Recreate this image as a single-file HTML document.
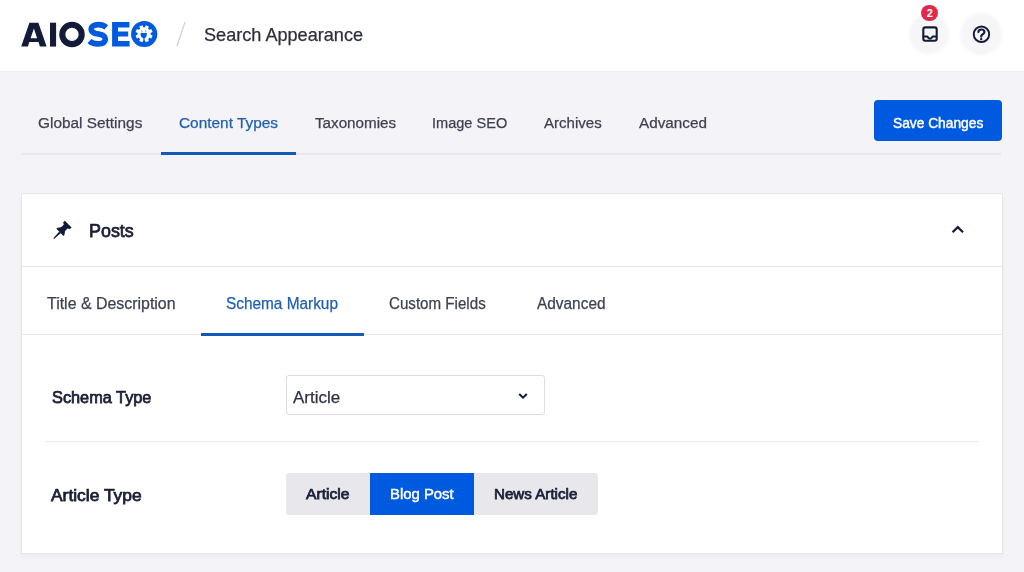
<!DOCTYPE html>
<html><head><meta charset="utf-8">
<style>
*{margin:0;padding:0;box-sizing:border-box}
html,body{width:1024px;height:572px;overflow:hidden;background:#F4F3F8;font-family:"Liberation Sans",sans-serif}
.a{position:absolute;white-space:nowrap}
#hdr{position:absolute;left:0;top:0;width:1024px;height:71px;background:#fff;box-shadow:0 1px 2px rgba(30,30,60,0.03)}
.t{font-size:15px;line-height:15px;color:#434960}
.st{font-size:15px;line-height:15px;color:#434960}
.blue{color:#1f5fb8}
</style></head><body>
<div id="hdr">
  <svg class="a" style="left:0;top:0" width="170" height="71" viewBox="0 0 170 71">
    <path fill="#141B38" fill-rule="evenodd" d="M21.2 46.6 L29.4 22.7 L38.4 22.7 L46.6 46.6 L39.9 46.6 L38.5 42 L29.3 42 L27.9 46.6 Z M33.9 28.6 L30.6 38.2 L37.1 38.2 Z"/>
    <rect x="50" y="22.7" width="6.1" height="23.9" fill="#141B38"/>
    <circle cx="72" cy="34.4" r="9.7" fill="none" stroke="#141B38" stroke-width="6.1"/>
    <path fill="none" stroke="#005AE0" stroke-width="5.6" d="M106.3 27.3 C104 25.3 101 24.6 98.2 24.6 C94 24.6 91.2 26.3 91.2 29.2 C91.2 32.6 95 33.4 98.6 34.1 C102.5 34.8 105.3 35.9 105.3 39.3 C105.3 42.4 102.3 43.9 98 43.9 C94.5 43.9 91.3 42.8 89.5 41"/>
    <path fill="#005AE0" d="M112.1 21.9 H129.4 V27.6 H118 V31.4 H128.2 V36.6 H118 V40.9 H129.6 V46.5 H112.1 Z"/>
    <circle cx="144.2" cy="34" r="13.1" fill="#005AE0"/>
    <g transform="translate(144.1 33.8)" fill="#fff">
      <circle r="6.6"/>
      <rect x="-1.7" y="-8.5" width="3.4" height="4" transform="rotate(22.5)"/>
      <rect x="-1.7" y="-8.5" width="3.4" height="4" transform="rotate(67.5)"/>
      <rect x="-1.7" y="-8.5" width="3.4" height="4" transform="rotate(112.5)"/>
      <rect x="-1.7" y="-8.5" width="3.4" height="4" transform="rotate(157.5)"/>
      <rect x="-1.7" y="-8.5" width="3.4" height="4" transform="rotate(202.5)"/>
      <rect x="-1.7" y="-8.5" width="3.4" height="4" transform="rotate(247.5)"/>
      <rect x="-1.7" y="-8.5" width="3.4" height="4" transform="rotate(292.5)"/>
      <rect x="-1.7" y="-8.5" width="3.4" height="4" transform="rotate(337.5)"/>
    </g>
    <path fill="#005AE0" d="M140.6 33 H146.8 V34.6 C146.8 36.6 145.6 38 144.6 38.3 V42.2 H143.4 V38.3 C142 38 140.6 36.6 140.6 34.6 Z"/>
    <rect x="141.3" y="30.3" width="1.1" height="2.2" fill="#8db4f0"/>
    <rect x="145.1" y="30.3" width="1.1" height="2.2" fill="#8db4f0"/>
  </svg>
  <svg class="a" style="left:174;top:18px;left:174px" width="14" height="32"><line x1="3" y1="28" x2="11" y2="4" stroke="#D0D1D6" stroke-width="1.3"/></svg>
  <div class="a" style="left:909px;top:14px;width:40px;height:40px;border-radius:50%;background:#F6F6F9;filter:blur(1.5px)"></div>
  <div class="a" style="left:960px;top:13px;width:42px;height:42px;border-radius:50%;background:#F6F6F9;filter:blur(1.5px)"></div>
  <div class="a" style="left:921.4px;top:4.8px;width:16.6px;height:16.6px;border-radius:50%;background:#E02A4A;color:#fff;font-size:11px;font-weight:700;line-height:16.6px;text-align:center">2</div>
  <svg class="a" style="left:900px;top:0" width="124" height="71" viewBox="900 0 124 71">
    <rect x="923.3" y="27.4" width="13.4" height="13.3" rx="2" fill="none" stroke="#141B38" stroke-width="2.1"/>
    <path d="M923.2 36.6 H927 C927.9 36.6 928.3 38.7 930 38.7 C931.7 38.7 932.1 36.6 933 36.6 H936.8" fill="none" stroke="#141B38" stroke-width="2"/>
    <circle cx="981.45" cy="34.25" r="7.7" fill="none" stroke="#141B38" stroke-width="1.95"/>
    <path d="M978.4 32.1 C978.4 30.3 979.8 29.5 981.4 29.5 C983.1 29.5 984.4 30.5 984.4 32 C984.4 33.6 982.7 34.2 981.8 35.1 C981.3 35.6 981.2 36 981.2 36.8" fill="none" stroke="#141B38" stroke-width="2.1" stroke-linecap="round"/>
    <circle cx="981.2" cy="39.1" r="1.2" fill="#141B38"/>
  </svg>
</div>

<div class="a" style="left:21px;top:152.5px;width:980px;height:2px;background:#E8E8EC"></div>
<div class="a" style="left:161px;top:152px;width:135px;height:3px;background:#1259B8"></div>

<div class="a" style="left:874px;top:100px;width:128px;height:41px;border-radius:4px;background:#005AE0;"></div>

<div class="a" style="left:21.5px;top:194px;width:980.5px;height:358.5px;background:#fff;box-shadow:0 0 0 1px #E7E7EB,0 3px 5px rgba(30,30,60,0.05)"></div>
<div class="a" style="left:21px;top:266px;width:981px;height:1px;background:#E8E8EC"></div>
<div class="a" style="left:21px;top:334px;width:981px;height:1px;background:#E8E8EC"></div>


<div class="a" style="left:201px;top:333px;width:163px;height:3px;background:#1259B8"></div>

<div class="a" style="left:286px;top:375px;width:259px;height:40px;border:1px solid #DCDDE2;border-radius:3px;background:#fff"></div>

<div class="a" style="left:45px;top:441px;width:934px;height:1px;background:#EBEBEF"></div>

<div class="a" style="left:286px;top:473px;width:312px;height:42px;border-radius:3px;background:#E8E8EC"></div>
<div class="a" style="left:370px;top:473px;width:104px;height:42px;background:#005AE0"></div>

<div class="a" style="left:204.11px;top:25.64px;font-size:18.5px;line-height:18.5px;font-weight:400;color:#2B2E3C;transform:scaleX(0.9784);transform-origin:0 0;-webkit-text-stroke:0.25px #2B2E3C">Search Appearance</div>
<div class="a" style="left:38.28px;top:114.78px;font-size:15.5px;line-height:15.5px;font-weight:400;color:#3E4150;transform:scaleX(0.9925);transform-origin:0 0;-webkit-text-stroke:0.25px #3E4150">Global Settings</div>
<div class="a" style="left:179.38px;top:114.78px;font-size:15.5px;line-height:15.5px;font-weight:400;color:#2160B0;transform:scaleX(0.9937);transform-origin:0 0;-webkit-text-stroke:0.25px #2160B0">Content Types</div>
<div class="a" style="left:314.69px;top:114.78px;font-size:15.5px;line-height:15.5px;font-weight:400;color:#3E4150;transform:scaleX(0.9807);transform-origin:0 0;-webkit-text-stroke:0.25px #3E4150">Taxonomies</div>
<div class="a" style="left:432.43px;top:114.78px;font-size:15.5px;line-height:15.5px;font-weight:400;color:#3E4150;transform:scaleX(0.9392);transform-origin:0 0;-webkit-text-stroke:0.25px #3E4150">Image SEO</div>
<div class="a" style="left:544.40px;top:114.78px;font-size:15.5px;line-height:15.5px;font-weight:400;color:#3E4150;transform:scaleX(0.9708);transform-origin:0 0;-webkit-text-stroke:0.25px #3E4150">Archives</div>
<div class="a" style="left:638.68px;top:114.78px;font-size:15.5px;line-height:15.5px;font-weight:400;color:#3E4150;transform:scaleX(0.9851);transform-origin:0 0;-webkit-text-stroke:0.25px #3E4150">Advanced</div>
<div class="a" style="left:893.47px;top:115.58px;font-size:14.2px;line-height:14.2px;font-weight:400;color:#FFFFFF;transform:scaleX(0.9699);transform-origin:0 0;-webkit-text-stroke:0.45px #FFFFFF">Save Changes</div>
<div class="a" style="left:89.42px;top:221.99px;font-size:18.2px;line-height:18.2px;font-weight:400;color:#1B1F36;transform:scaleX(0.9844);transform-origin:0 0;-webkit-text-stroke:0.75px #1B1F36">Posts</div>
<div class="a" style="left:46.84px;top:295.76px;font-size:16px;line-height:16px;font-weight:400;color:#3E4150;transform:scaleX(0.9950);transform-origin:0 0;-webkit-text-stroke:0.25px #3E4150">Title &amp; Description</div>
<div class="a" style="left:226.18px;top:295.76px;font-size:16px;line-height:16px;font-weight:400;color:#2160B0;transform:scaleX(0.9608);transform-origin:0 0;-webkit-text-stroke:0.25px #2160B0">Schema Markup</div>
<div class="a" style="left:388.89px;top:295.76px;font-size:16px;line-height:16px;font-weight:400;color:#3E4150;transform:scaleX(0.9459);transform-origin:0 0;-webkit-text-stroke:0.25px #3E4150">Custom Fields</div>
<div class="a" style="left:536.58px;top:295.76px;font-size:16px;line-height:16px;font-weight:400;color:#3E4150;transform:scaleX(0.9630);transform-origin:0 0;-webkit-text-stroke:0.25px #3E4150">Advanced</div>
<div class="a" style="left:51.72px;top:388.83px;font-size:16.5px;line-height:16.5px;font-weight:400;color:#1B1F36;transform:scaleX(0.9884);transform-origin:0 0;-webkit-text-stroke:0.75px #1B1F36">Schema Type</div>
<div class="a" style="left:293.18px;top:388.61px;font-size:17px;line-height:17px;font-weight:400;color:#2E3140;transform:scaleX(0.9970);transform-origin:0 0;-webkit-text-stroke:0.25px #2E3140">Article</div>
<div class="a" style="left:51.25px;top:486.89px;font-size:16.2px;line-height:16.2px;font-weight:400;color:#1B1F36;transform:scaleX(1.0755);transform-origin:0 0;-webkit-text-stroke:0.75px #1B1F36">Article Type</div>
<div class="a" style="left:306.46px;top:487.27px;font-size:14.8px;line-height:14.8px;font-weight:400;color:#1B1F36;transform:scaleX(1.0569);transform-origin:0 0;-webkit-text-stroke:0.75px #1B1F36">Article</div>
<div class="a" style="left:390.31px;top:487.27px;font-size:14.8px;line-height:14.8px;font-weight:400;color:#FFFFFF;transform:scaleX(1.0054);transform-origin:0 0;-webkit-text-stroke:0.45px #FFFFFF">Blog Post</div>
<div class="a" style="left:494.39px;top:487.27px;font-size:14.8px;line-height:14.8px;font-weight:400;color:#1B1F36;transform:scaleX(1.0234);transform-origin:0 0;-webkit-text-stroke:0.75px #1B1F36">News Article</div>
<svg class="a" style="left:0;top:0" width="1024" height="572" viewBox="0 0 1024 572">
    <g transform="translate(67.5 224.8) rotate(45)" fill="#141B38">
    <path d="M-4.8 -1 L4.8 -1 L4.8 1.3 L2.6 2.7 L2.8 6.4 L5 9.2 L5 10.7 L-5 10.7 L-5 9.2 L-2.8 6.4 L-2.6 2.7 L-4.8 1.3 Z"/>
    <path d="M-1.1 10.5 L1.1 10.5 L0.5 19.5 L-0.5 19.5 Z"/>
  </g>
  <path d="M952.6 232.3 L957.8 227.1 L963 232.3" fill="none" stroke="#141B38" stroke-width="2.2"/>
  <path d="M519.2 394 L523 397.7 L526.8 394" fill="none" stroke="#141B38" stroke-width="2"/>
</svg>
</body></html>
